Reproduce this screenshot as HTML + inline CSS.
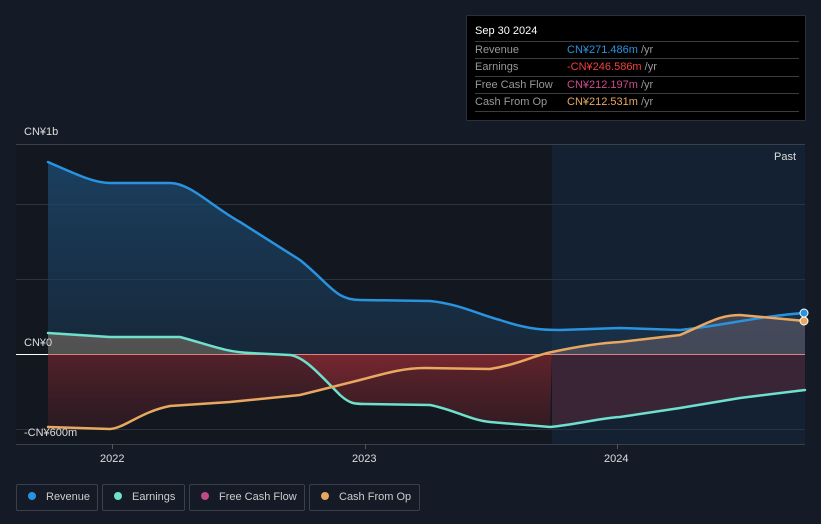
<!DOCTYPE html>
<html><head><meta charset="utf-8"><style>
body{margin:0;background:#151b26;width:821px;height:524px;overflow:hidden;font-family:"Liberation Sans",sans-serif;position:relative}
.tt{position:absolute;left:466px;top:15px;width:340px;height:106px;background:#000;border:1px solid #2a2f38;box-sizing:border-box}
.tt .h{position:absolute;left:8px;top:9px;color:#fff;font-size:11px}
.row{position:absolute;left:8px;width:324px;height:17px;border-top:1px solid #3a3d44;font-size:11px;line-height:17px}
.row span.l{color:#999;display:inline-block;width:92px}
.yr{color:#999}
.lg{position:absolute;top:484px;height:27px;border:1px solid #3b404a;border-radius:2px;box-sizing:border-box;color:#ccc;font-size:11px;line-height:25px}
.lg i{display:inline-block;width:8px;height:8px;border-radius:50%;margin:0 10px 0 11px;vertical-align:-0px}
</style></head><body>
<svg width="821" height="524" style="position:absolute;left:0;top:0">
<defs>
<linearGradient id="bl" x1="0" y1="0" x2="0" y2="1"><stop offset="0" stop-color="#1c4a70" stop-opacity=".8"/><stop offset="1" stop-color="#1c3a55" stop-opacity=".5"/></linearGradient>
<linearGradient id="rd" x1="0" y1="0" x2="0" y2="1"><stop offset="0" stop-color="#8a2a32" stop-opacity=".8"/><stop offset="1" stop-color="#4a1e26" stop-opacity=".6"/></linearGradient>
</defs>
<rect x="16" y="144" width="536" height="300" fill="#121720"/>
<rect x="552" y="144" width="253" height="300" fill="#132132"/>
<g stroke="#2c3340" stroke-width="1">
<line x1="16" y1="144.5" x2="805" y2="144.5" stroke="#3a404a"/>
<line x1="16" y1="204.5" x2="805" y2="204.5"/>
<line x1="16" y1="279.5" x2="805" y2="279.5"/>
<line x1="16" y1="429.5" x2="805" y2="429.5"/>
<line x1="16" y1="444.5" x2="805" y2="444.5" stroke="#3a404a"/>
<line x1="112.5" y1="444" x2="112.5" y2="449" stroke="#555"/>
<line x1="365.5" y1="444" x2="365.5" y2="449" stroke="#555"/>
<line x1="617.5" y1="444" x2="617.5" y2="449" stroke="#555"/>
</g>
<path d="M48,162 C80,176 95,183 110,183 L170,183 C190,183 210,205 240,222 L300,260 C330,284 335,300 360,300 L430,301 C460,304 480,315 500,320 C530,330 545,330 560,330 L620,328 L680,330 C720,326 760,316 805,313 L805,354 L48,354Z" fill="url(#bl)"/>
<path d="M48,333 L110,337 L180,337 C210,345 225,352 250,353 L290,355 C305,357 320,375 340,395 C350,404 355,404 365,404 L430,405 C455,410 470,420 490,422 L550,427 L552,354 L48,354Z" fill="url(#rd)"/>
<path d="M552,427 C580,424 600,418 620,417 L680,408 L740,398 L805,390 L805,354 L552,354Z" fill="#5a2a3a" opacity=".55"/>
<path d="M48,427 L110,429 C125,428 140,412 170,406 L230,402 L300,395 L360,380 C390,372 405,368 425,368 L490,369 C520,364 535,355 552,352 L552,354 L48,354Z" fill="url(#rd)" opacity=".7"/>
<path d="M48,333 L110,337 L180,337 C210,345 225,352 250,353 L290,354 L290,354 L48,354Z" fill="#3a7a70" opacity=".5"/>
<path d="M552,352 C580,346 600,343 620,342 L680,335 C710,322 720,315 740,315 L805,321 L805,354 L552,354Z" fill="#7a6a70" opacity=".45"/>
<line x1="16" y1="354.5" x2="48" y2="354.5" stroke="#fff" stroke-width="1"/>
<line x1="48" y1="354.5" x2="805" y2="354.5" stroke="#e08080" stroke-width="1"/>
<g fill="none" stroke-width="2.5" stroke-linecap="round">
<path d="M48,162 C80,176 95,183 110,183 L170,183 C190,183 210,205 240,222 L300,260 C330,284 335,300 360,300 L430,301 C460,304 480,315 500,320 C530,330 545,330 560,330 L620,328 L680,330 C720,326 760,316 805,313" stroke="#2a93e0"/>
<path d="M48,333 L110,337 L180,337 C210,345 225,352 250,353 L290,355 C305,357 320,375 340,395 C350,404 355,404 365,404 L430,405 C455,410 470,420 490,422 L550,427 C580,424 600,418 620,417 L680,408 L740,398 L805,390" stroke="#6ee0cc"/>
<path d="M48,427 L110,429 C125,428 140,412 170,406 L230,402 L300,395 L360,380 C390,372 405,368 425,368 L490,369 C520,364 535,355 552,352 C580,346 600,343 620,342 L680,335 C710,322 720,315 740,315 L805,321" stroke="#e8a860"/>
</g>
<circle cx="804" cy="313" r="4" fill="#2a93e0" stroke="#fff" stroke-width="1"/>
<circle cx="804" cy="321" r="4" fill="#e8a860" stroke="#fff" stroke-width="1"/>
<g fill="#ddd" font-size="11" font-family="Liberation Sans,sans-serif">
<text x="24" y="135">CN¥1b</text>
<text x="24" y="346">CN¥0</text>
<text x="24" y="436">-CN¥600m</text>
<text x="100" y="462">2022</text>
<text x="352" y="462">2023</text>
<text x="604" y="462">2024</text>
<text x="774" y="160">Past</text>
</g>
</svg>
<div class="tt"><div class="h">Sep 30 2024</div>
<div class="row" style="top:25px"><span class="l">Revenue</span><span style="color:#2a93e0">CN¥271.486m</span> <span class="yr">/yr</span></div>
<div class="row" style="top:42px"><span class="l">Earnings</span><span style="color:#f04040">-CN¥246.586m</span> <span class="yr">/yr</span></div>
<div class="row" style="top:60px"><span class="l">Free Cash Flow</span><span style="color:#d04a90">CN¥212.197m</span> <span class="yr">/yr</span></div>
<div class="row" style="top:77px;border-bottom:1px solid #3a3d44"><span class="l">Cash From Op</span><span style="color:#e8a860">CN¥212.531m</span> <span class="yr">/yr</span></div>
</div>
<div class="lg" style="left:16px;width:82px"><i style="background:#2a93e0"></i>Revenue</div>
<div class="lg" style="left:102px;width:83px"><i style="background:#6ee0cc"></i>Earnings</div>
<div class="lg" style="left:189px;width:116px"><i style="background:#c04a88"></i>Free Cash Flow</div>
<div class="lg" style="left:309px;width:111px"><i style="background:#e8a860"></i>Cash From Op</div>
</body></html>
